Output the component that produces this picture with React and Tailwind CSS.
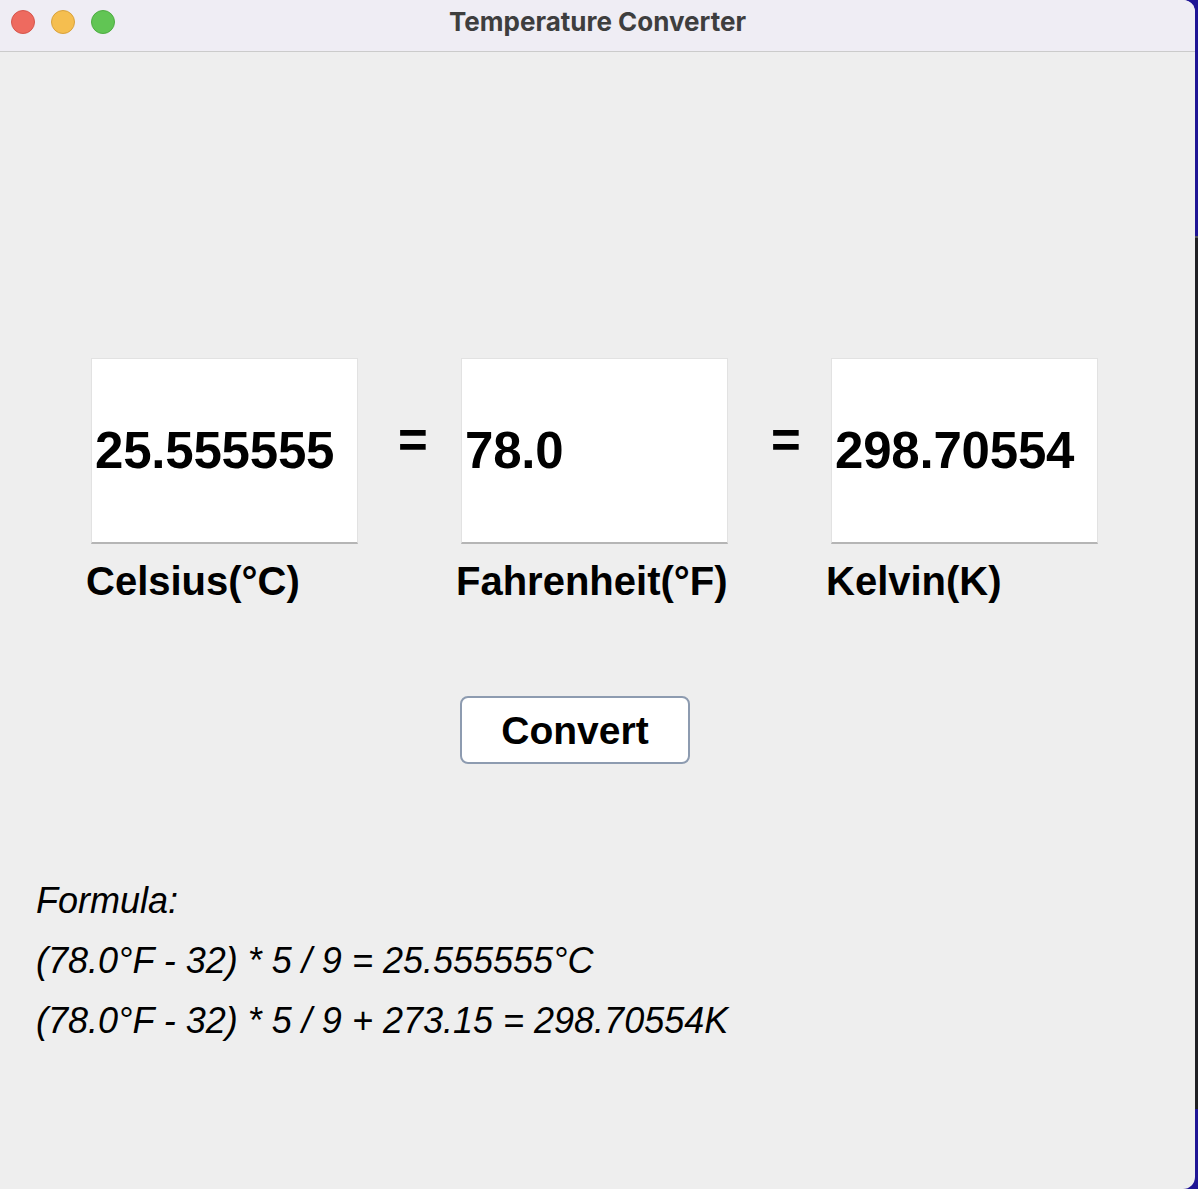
export default function App() {
  const box =
    "w-[267px] h-[186px] bg-white border-l border-t border-r border-[#e2e2e2] border-b-2 border-b-[#b5b5b5] flex items-center pl-[3px]";
  const num = "text-[51px] leading-none font-bold text-black tracking-[-0.2px]";
  const label = "text-[40px] leading-none font-bold text-black ml-[-5px] mt-[17px] whitespace-nowrap";
  const eq = "w-[103px] pl-[40px] mt-[57px] text-[51px] leading-none font-bold text-black";
  return (
    <div
      className="w-[1198px] h-[1189px] flex bg-[#1f1595] overflow-hidden"
      style={{ fontFamily: '"Liberation Sans", Arial, sans-serif' }}
    >
      <div className="w-[1195px] h-full bg-[#eeeeee] rounded-tr-[12px] rounded-br-[12px] overflow-hidden flex flex-col relative z-10">
        {/* Title bar */}
        <div className="h-[52px] shrink-0 bg-[#efedf4] border-b border-[#cbcbcb] flex items-start relative">
          <div className="flex items-center gap-[16px] pl-[11px] pt-[10px]">
            <div className="w-[24px] h-[24px] rounded-full bg-[#ee6a5f] border border-[#d6564c]" />
            <div className="w-[24px] h-[24px] rounded-full bg-[#f5be4f] border border-[#d9a23c]" />
            <div className="w-[24px] h-[24px] rounded-full bg-[#61c554] border border-[#4ead42]" />
          </div>
          <div
            className="absolute inset-0 flex items-center justify-center text-[26px] font-bold text-[#3e3e3e] pb-[8px]"
            style={{ fontFamily: 'Inter, "Noto Sans", sans-serif' }}
          >
            Temperature Converter
          </div>
        </div>

        {/* Content */}
        <div className="flex flex-col">
          <div className="flex items-start mt-[306px] pl-[91px]">
            <div className="flex flex-col">
              <div className={box}>
                <span className={num}>25.555555</span>
              </div>
              <div className={label}>Celsius(°C)</div>
            </div>
            <div className={eq}>=</div>
            <div className="flex flex-col">
              <div className={box}>
                <span className={num}>78.0</span>
              </div>
              <div className={label}>Fahrenheit(°F)</div>
            </div>
            <div className={eq + " pl-[43px]"}>=</div>
            <div className="flex flex-col">
              <div className={box}>
                <span className={num}>298.70554</span>
              </div>
              <div className={label}>Kelvin(K)</div>
            </div>
          </div>

          <div className="pl-[460px] mt-[95px]">
            <button className="w-[230px] h-[68px] bg-white border-2 border-[#8d9bb0] rounded-[8px] flex items-center justify-center text-[39px] font-bold text-black leading-none">
              Convert
            </button>
          </div>

          <div className="mt-[107px] pl-[36px] italic text-[36px] leading-[60px] text-black">
            <div>Formula:</div>
            <div>(78.0°F - 32) * 5 / 9 = 25.555555°C</div>
            <div>(78.0°F - 32) * 5 / 9 + 273.15 = 298.70554K</div>
          </div>
        </div>
      </div>
      <div className="w-[3px] h-full flex flex-col">
        <div className="h-[236px] bg-[#1f1595]" />
        <div className="h-[2px] bg-[#55555c]" />
        <div className="flex-1 bg-[#1f1f24]" />
        <div className="h-[80px] bg-[#1f1595]" />
      </div>
    </div>
  );
}
